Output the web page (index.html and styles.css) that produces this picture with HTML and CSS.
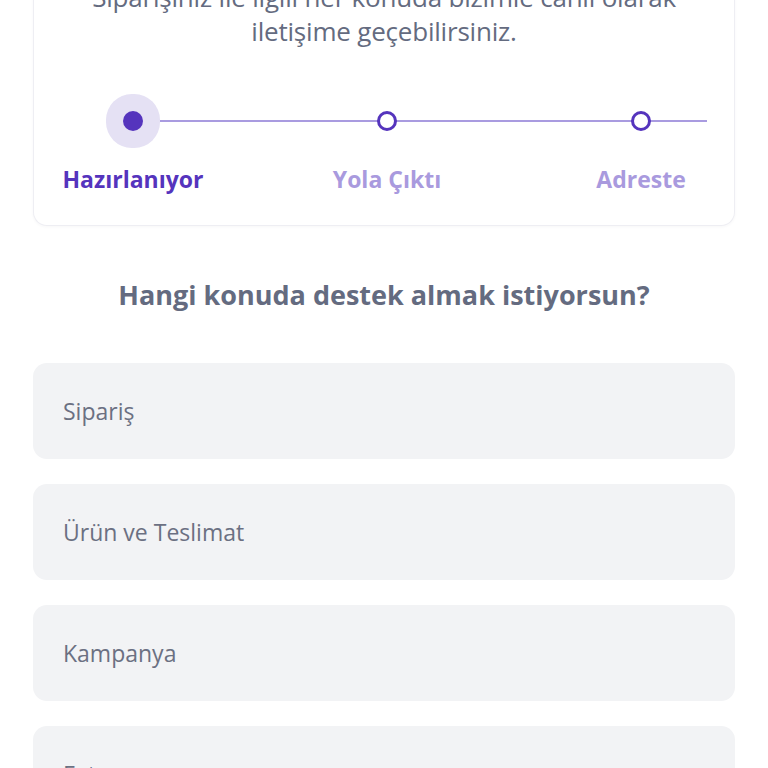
FILE: index.html
```html
<html>
<head>
    <meta charset="utf-8">
    <meta name="viewport" content="width=device-width, initial-scale=1.0">
    <title>Destek</title>
    <link rel="stylesheet" href="styles.css">
</head>
<body>
    <div class="page">
        <div class="status-card">
            <p class="status-text">Siparişiniz ile ilgili her konuda bizimle canlı olarak<br>iletişime geçebilirsiniz.</p>
            <div class="stepper">
                <div class="dots">
                    <div class="step"><span class="dot active"></span></div>
                    <div class="step"><span class="dot"></span></div>
                    <div class="step"><span class="dot"></span></div>
                </div>
                <div class="labels">
                    <div class="label active">Hazırlanıyor</div>
                    <div class="label">Yola Çıktı</div>
                    <div class="label">Adreste</div>
                </div>
            </div>
        </div>

        <h2 class="question">Hangi konuda destek almak istiyorsun?</h2>

        <ul class="topics">
            <li>Sipariş</li>
            <li>Ürün ve Teslimat</li>
            <li>Kampanya</li>
            <li>Fatura</li>
        </ul>
    </div>
</body>
</html>
```

FILE: styles.css
```css
* {
    margin: 0;
    padding: 0;
    box-sizing: border-box;
}
body {
    background-color: #fff;
    font-family: "Open Sans", "Noto Sans", sans-serif;
    overflow: hidden;
}
.page {
    padding: 0 33px;
}
.status-card {
    margin-top: -50px;
    padding: 30px 0 30px;
    background-color: #fff;
    border: 1px solid #eeeef3;
    border-top: none;
    border-radius: 0 0 14px 14px;
    box-shadow: 0 1px 3px rgba(40, 40, 80, 0.04);
}
.status-text {
    text-align: center;
    font-size: 26px;
    line-height: 34px;
    letter-spacing: -0.2px;
    color: #646b80;
}
.stepper {
    margin: 46px 0 0 -28px; /* 3 kolon 254px, ilk nokta x=133 */
}
.dots,
.labels {
    display: grid;
    grid-template-columns: 254px 254px 254px;
}
.dots {
    height: 54px;
    background: linear-gradient(#a99be0, #a99be0) no-repeat;
    background-size: 574px 2px;
    background-position: 127px center;
}
.step {
    display: flex;
    justify-content: center;
    align-items: center;
}
.dot {
    display: block;
    width: 20px;
    height: 20px;
    border-radius: 50%;
    background-color: #fff;
    border: 3px solid #5534bd;
}
.dot.active {
    border: none;
    background-color: #5534bd;
    box-shadow: 0 0 0 17px #e5e1f4;
}
.labels {
    margin-top: 15px;
}
.label {
    text-align: center;
    font-size: 23px;
    line-height: 32px;
    font-weight: 700;
    color: #a99ade;
}
.label.active {
    color: #5534bd;
}
.question {
    margin-top: 51px;
    text-align: center;
    font-size: 27px;
    line-height: 36px;
    font-weight: 700;
    color: #646b80;
}
.topics {
    list-style: none;
    margin-top: 50px;
    display: flex;
    flex-direction: column;
    gap: 25px;
}
.topics li {
    height: 96px;
    display: flex;
    align-items: center;
    padding-left: 30px;
    background-color: #f2f3f5;
    border-radius: 14px;
    font-size: 23px;
    color: #6b7082;
}
```
